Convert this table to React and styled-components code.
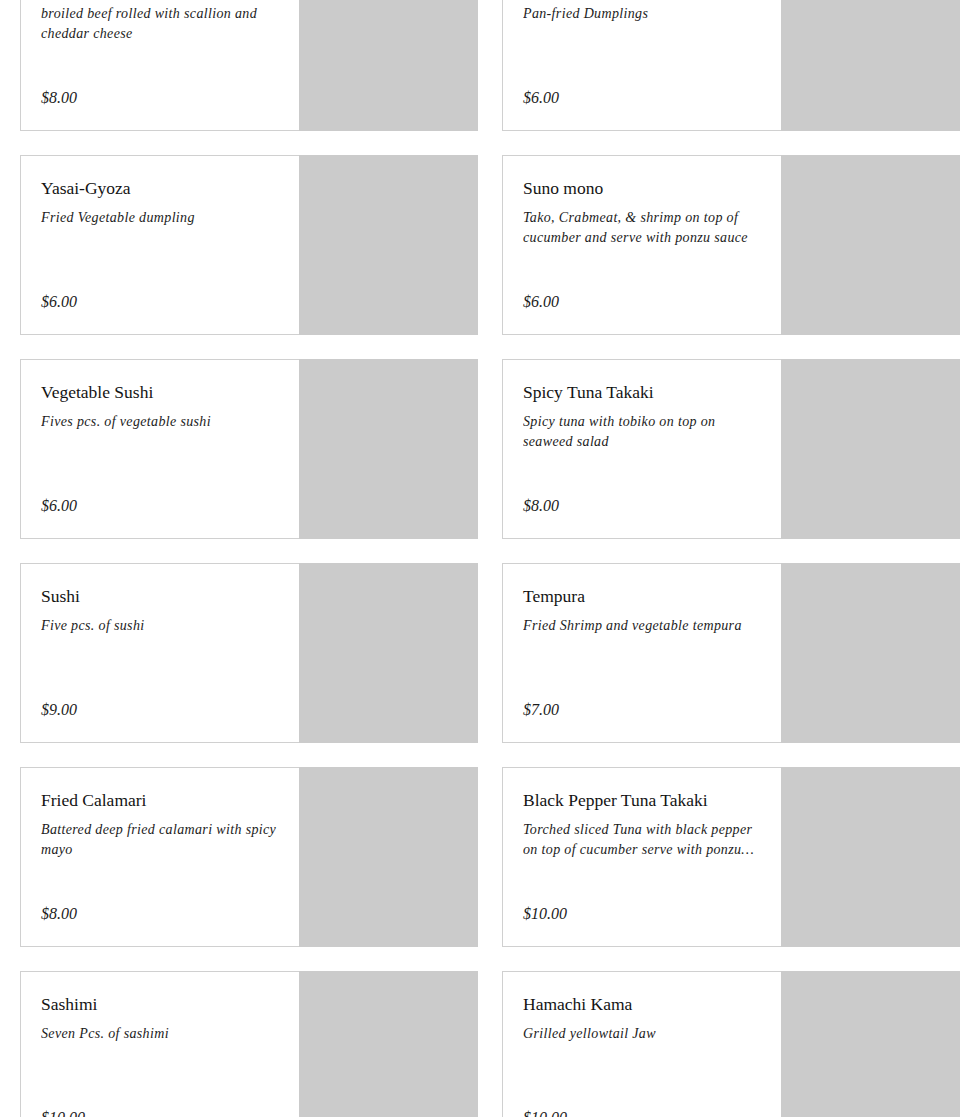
import React from "react";
import styled, { createGlobalStyle } from "styled-components";

const Global = createGlobalStyle`
  html, body { margin: 0; padding: 0; background: #ffffff; }
  body { font-family: "Liberation Serif", "Times New Roman", serif; color: #151515; }
`;

const Page = styled.div`
  padding: 0 5px 40px 20px;
  margin-top: -49px;
`;

const Grid = styled.div`
  display: grid;
  grid-template-columns: 458px 458px;
  column-gap: 24px;
  row-gap: 24px;
`;

const Card = styled.div`
  display: flex;
  height: 180px;
`;

const Body = styled.div`
  width: 279px;
  box-sizing: border-box;
  border: 1px solid #d0d0d0;
  border-right: none;
  padding: 20px 21px 22px 20px;
  display: flex;
  flex-direction: column;
  background: #fff;
`;

const Title = styled.div`
  font-size: 17.5px;
  line-height: 24px;
  color: #141414;
  white-space: nowrap;
`;

const Desc = styled.div`
  margin-top: 8px;
  font-size: 14px;
  line-height: 20px;
  font-style: italic;
  letter-spacing: 0.35px;
  color: #1c1c1c;
  display: -webkit-box;
  -webkit-line-clamp: 2;
  -webkit-box-orient: vertical;
  overflow: hidden;
`;

const Price = styled.div`
  margin-top: auto;
  font-size: 16px;
  line-height: 20px;
  font-style: italic;
  color: #1c1c1c;
`;

const Picture = styled.div`
  width: 179px;
  height: 180px;
  background: #cbcbcb;
`;

const items = [
  { t: "Negimaki", d: "broiled beef rolled with scallion and cheddar cheese", p: "$8.00" },
  { t: "Gyoza", d: "Pan-fried Dumplings", p: "$6.00" },
  { t: "Yasai-Gyoza", d: "Fried Vegetable dumpling", p: "$6.00" },
  { t: "Suno mono", d: "Tako, Crabmeat, & shrimp on top of cucumber and serve with ponzu sauce", p: "$6.00" },
  { t: "Vegetable Sushi", d: "Fives pcs. of vegetable sushi", p: "$6.00" },
  { t: "Spicy Tuna Takaki", d: "Spicy tuna with tobiko on top on seaweed salad", p: "$8.00" },
  { t: "Sushi", d: "Five pcs. of sushi", p: "$9.00" },
  { t: "Tempura", d: "Fried Shrimp and vegetable tempura", p: "$7.00" },
  { t: "Fried Calamari", d: "Battered deep fried calamari with spicy mayo", p: "$8.00" },
  { t: "Black Pepper Tuna Takaki", d: "Torched sliced Tuna with black pepper on top of cucumber serve with ponzu sauce", p: "$10.00" },
  { t: "Sashimi", d: "Seven Pcs. of sashimi", p: "$10.00" },
  { t: "Hamachi Kama", d: "Grilled yellowtail Jaw", p: "$10.00" },
];

export default function App() {
  return (
    <>
      <Global />
      <Page>
        <Grid>
          {items.map((it) => (
            <Card key={it.t}>
              <Body>
                <Title>{it.t}</Title>
                <Desc>{it.d}</Desc>
                <Price>{it.p}</Price>
              </Body>
              <Picture />
            </Card>
          ))}
        </Grid>
      </Page>
    </>
  );
}
